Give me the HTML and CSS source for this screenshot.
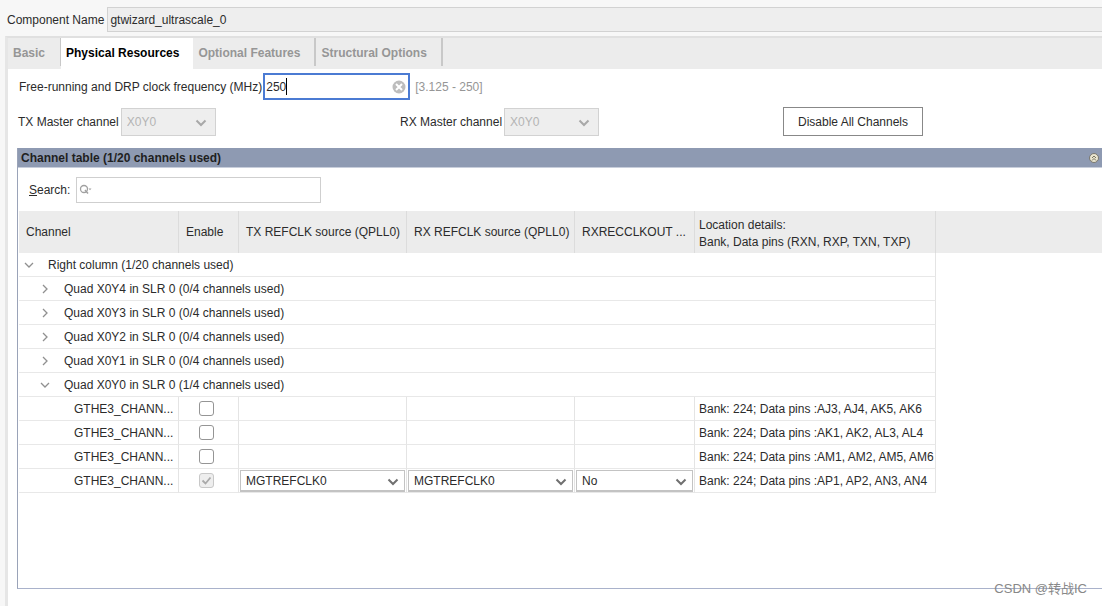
FILE: index.html
```
<!DOCTYPE html>
<html lang="en">
<head>
<meta charset="utf-8">
<title>Component configuration</title>
<link rel="stylesheet" href="styles.css">
</head>
<body>
<svg class="defs" aria-hidden="true">
  <symbol id="down" viewBox="0 0 12 8"><path d="M1.5 1.5 6 6l4.500-4.500" fill="none" stroke="currentColor" stroke-width="2"/></symbol>
  <symbol id="open" viewBox="0 0 12 12"><path d="M2 4l4 4 4-4" fill="none" stroke="currentColor" stroke-width="1.300"/></symbol>
  <symbol id="closed" viewBox="0 0 12 12"><path d="M4 2l4 4-4 4" fill="none" stroke="currentColor" stroke-width="1.300"/></symbol>
</svg>
<div class="name-row">
  <label for="component">Component Name</label>
  <input id="component" class="component" value="gtwizard_ultrascale_0">
</div>
<main class="panel">
  <div class="tabs" role="tablist">
    <button class="tab" role="tab">Basic</button>
    <button class="tab selected" role="tab" aria-selected="true">Physical Resources</button>
    <button class="tab divided" role="tab">Optional Features</button>
    <button class="tab divided" role="tab">Structural Options</button>
  </div>
  <div class="content">
    <div class="frequency">
      <label for="freq">Free-running and DRP clock frequency (MHz)</label>
      <div class="freq-box">
        <input id="freq" value="250">
        <span class="caret"></span>
        <button class="clear" aria-label="Clear"><svg viewBox="0 0 14 14"><circle cx="7" cy="7" r="6.500" fill="#bdbdbd"/><path d="M4 4l6 6M10 4l-6 6" stroke="#fff" stroke-width="2"/></svg></button>
      </div>
      <span class="hint">[3.125 - 250]</span>
    </div>
    <div class="masters">
      <div class="master">
        <label for="tx">TX Master channel</label>
        <div class="picker muted"><select id="tx" disabled><option>X0Y0</option></select><svg><use href="#down"/></svg></div>
      </div>
      <div class="master">
        <label for="rx">RX Master channel</label>
        <div class="picker muted"><select id="rx" disabled><option>X0Y0</option></select><svg><use href="#down"/></svg></div>
      </div>
      <button class="disable">Disable All Channels</button>
    </div>
    <section class="channels">
      <div class="bar">
        <h2>Channel table (1/20 channels used)</h2>
        <button class="collapse" aria-label="Collapse"><svg viewBox="0 0 10 10"><circle cx="5" cy="5" r="4.500" fill="#e8e4cf" stroke="#69665a" stroke-width=".8"/><path d="M3 5l2-2 2 2M3 7.500l2-2 2 2" fill="none" stroke="#77735f" stroke-width="1"/></svg></button>
      </div>
      <div class="search">
        <label for="search"><u>S</u>earch:</label>
        <div class="search-box">
          <svg viewBox="0 0 14 12"><circle cx="5" cy="5" r="3.500" fill="none" stroke="#a0a0a0" stroke-width="1.300"/><path d="M6 6l3 3.500" stroke="#a0a0a0" stroke-width="1.500"/><path d="M9.500 4.500h3L11 6.200z" fill="#a0a0a0"/></svg>
          <input id="search" type="text">
        </div>
      </div>
      <table>
        <colgroup><col class="c-channel"><col class="c-enable"><col class="c-clock"><col class="c-clock"><col class="c-out"><col class="c-location"><col></colgroup>
        <thead>
          <tr><th>Channel</th><th>Enable</th><th>TX REFCLK source (QPLL0)</th><th>RX REFCLK source (QPLL0)</th><th>RXRECCLKOUT ...</th><th class="location two-line">Location details:<br>Bank, Data pins (RXN, RXP, TXN, TXP)</th><th></th></tr>
        </thead>
        <tbody>
          <tr><td colspan="6" class="group root"><div><svg><use href="#open"/></svg><span>Right column (1/20 channels used)</span></div></td></tr>
          <tr><td colspan="6" class="group"><div><svg><use href="#closed"/></svg><span>Quad X0Y4 in SLR 0 (0/4 channels used)</span></div></td></tr>
          <tr><td colspan="6" class="group"><div><svg><use href="#closed"/></svg><span>Quad X0Y3 in SLR 0 (0/4 channels used)</span></div></td></tr>
          <tr><td colspan="6" class="group"><div><svg><use href="#closed"/></svg><span>Quad X0Y2 in SLR 0 (0/4 channels used)</span></div></td></tr>
          <tr><td colspan="6" class="group"><div><svg><use href="#closed"/></svg><span>Quad X0Y1 in SLR 0 (0/4 channels used)</span></div></td></tr>
          <tr><td colspan="6" class="group"><div><svg><use href="#open"/></svg><span>Quad X0Y0 in SLR 0 (1/4 channels used)</span></div></td></tr>
          <tr><td class="leaf">GTHE3_CHANN...</td><td class="tick"><input type="checkbox" aria-label="Enable channel 3"></td><td></td><td></td><td></td><td class="location">Bank: 224; Data pins :AJ3, AJ4, AK5, AK6</td></tr>
          <tr><td class="leaf">GTHE3_CHANN...</td><td class="tick"><input type="checkbox" aria-label="Enable channel 2"></td><td></td><td></td><td></td><td class="location">Bank: 224; Data pins :AK1, AK2, AL3, AL4</td></tr>
          <tr><td class="leaf">GTHE3_CHANN...</td><td class="tick"><input type="checkbox" aria-label="Enable channel 1"></td><td></td><td></td><td></td><td class="location">Bank: 224; Data pins :AM1, AM2, AM5, AM6</td></tr>
          <tr><td class="leaf">GTHE3_CHANN...</td><td class="tick"><input type="checkbox" aria-label="Enable channel 0" checked disabled></td>
            <td class="cell"><div class="picker"><select aria-label="TX REFCLK source"><option>MGTREFCLK0</option></select><svg><use href="#down"/></svg></div></td>
            <td class="cell"><div class="picker"><select aria-label="RX REFCLK source"><option>MGTREFCLK0</option></select><svg><use href="#down"/></svg></div></td>
            <td class="cell"><div class="picker"><select aria-label="RXRECCLKOUT"><option>No</option></select><svg><use href="#down"/></svg></div></td>
            <td class="location">Bank: 224; Data pins :AP1, AP2, AN3, AN4</td></tr>
        </tbody>
      </table>
    </section>
  </div>
</main>
<div class="watermark">CSDN @转战IC</div>
</body>
</html>
```
FILE: styles.css
```
* { box-sizing: border-box; }
body {
  margin: 0;
  min-height: 100vh;
  display: flex;
  flex-direction: column;
  gap: 4px;
  padding: 7px 0 0 5px;
  background: #f7f7f7;
  color: #2b2b2b;
  font: 12px/18px "Liberation Sans", Arial, "Noto Sans CJK SC", sans-serif;
  overflow: hidden;
}
button, input, select { font: inherit; color: inherit; margin: 0; border-radius: 0; }
button { padding: 0; border: 0; background: none; }
label { white-space: nowrap; }
.defs { position: absolute; width: 0; height: 0; }

.name-row { display: flex; align-items: center; gap: 3px; padding-left: 2px; }
.component {
  flex: 1;
  height: 25px;
  padding: 0 2px;
  border: 1px solid #d2d2d2;
  border-right: 0;
  background: #eee;
}

.panel {
  flex: 1;
  display: flex;
  flex-direction: column;
  border-left: 3px solid #e6e6e6;
  border-top: 2px solid #e0e0e0;
  background: #fff;
}
.tabs { display: flex; align-items: flex-start; height: 31px; background: #ececec; }
.tab {
  height: 28px;
  padding: 2px 5px 0;
  color: #969696;
  font-weight: bold;
}
.tab:first-child { padding-right: 15px; border-right: 1px solid #c8c8c8; }
.tab.selected { height: 31px; padding: 0 14px 1px 5px; background: #fff; color: #000; }
.tab.divided { padding-right: 14px; border-right: 2px solid #c8c8c8; }

.content {
  flex: 1;
  display: flex;
  flex-direction: column;
  padding: 4px 0 17px 9px;
}
.frequency { display: flex; align-items: center; gap: 1px; padding-left: 2px; }
.freq-box {
  position: relative;
  display: flex;
  align-items: center;
  width: 147px;
  height: 27px;
  padding: 0 2px 0 1px;
  border: 2px solid #4b7bd3;
}
.freq-box input { flex: 1; min-width: 0; border: 0; padding: 0; outline: 0; background: none; }
.caret { position: absolute; left: 21px; top: 3px; width: 1px; height: 17px; background: #000; }
.clear { width: 14px; height: 14px; }
.clear svg, .collapse svg { display: block; width: 100%; height: 100%; }
.hint { margin-left: 4px; color: #969696; }

.masters { display: flex; align-items: center; padding: 7px 0 12px 1px; }
.master { display: flex; align-items: center; gap: 2px; width: 382px; }
.picker { position: relative; height: 22px; color: #2b2b2b; }
.picker select {
  display: block;
  width: 100%;
  height: 100%;
  padding: 0 24px 0 5px;
  border: 1px solid #c3c3c3;
  border-bottom-width: 2px;
  background: #fff;
  appearance: none;
  opacity: 1;
}
.picker svg { position: absolute; right: 6px; top: 8px; width: 12px; height: 8px; color: #707070; pointer-events: none; }
.picker.muted { width: 95px; height: 28px; }
.picker.muted select { border: 1px solid #d2d2d2; background: #eee; color: #b4b4b4; }
.picker.muted svg { right: 9px; top: 11px; color: #a8a8a8; }
.disable { width: 140px; height: 29px; margin-left: 1px; border: 1px solid #888; background: #fff; }

.channels {
  flex: 1;
  border-left: 1px solid #9aa3b8;
  border-bottom: 1px solid #a9b2cb;
}
.bar {
  display: flex;
  align-items: center;
  justify-content: space-between;
  height: 20px;
  padding: 0 3px;
  border-bottom: 1px solid #c8cedb;
  background: #8e9ab2;
}
.bar h2 { margin: 0; font-size: 12px; color: #1f1f1f; }
.collapse { width: 10px; height: 10px; }
.search { display: flex; align-items: center; gap: 6px; padding: 9px 0 8px 11px; }
.search-box { display: flex; align-items: center; width: 245px; height: 26px; padding: 0 2px; border: 1px solid #cfcfcf; }
.search-box svg { width: 14px; height: 12px; }
.search-box input { flex: 1; min-width: 0; border: 0; outline: 0; background: none; }

table { width: 100%; padding-left: 1px; table-layout: fixed; border-collapse: separate; border-spacing: 0; }
.c-channel { width: 160px; }
.c-enable { width: 60px; }
.c-clock { width: 168px; }
.c-out { width: 120px; }
.c-location { width: 241px; }
th, td { padding: 0 0 0 7px; text-align: left; font-weight: normal; white-space: nowrap; }
th { height: 42px; border-right: 1px solid #dcdcdc; background: #ececec; }
th:last-child { border-right: 0; }
td { height: 24px; line-height: 20px; border-right: 1px solid #e4e4e4; border-bottom: 1px solid #e8e8e8; }
.location { padding-left: 4px; }
.two-line { padding-top: 4px; line-height: 17px; }
.group { padding-left: 20px; }
.group.root { padding-left: 4px; }
.group div { display: flex; align-items: center; gap: 13px; }
.group svg { width: 12px; height: 12px; color: #909090; }
.leaf { padding-left: 55px; }
.tick { padding: 0 4px 0 0; text-align: center; }
.tick input {
  display: block;
  width: 15px;
  height: 15px;
  margin: 0 auto;
  appearance: none;
  border: 1px solid #959595;
  border-radius: 3px;
  background: #fff;
}
.tick input:checked {
  border-color: #c8c8c8;
  background: #eee url("data:image/svg+xml,%3Csvg xmlns='http://www.w3.org/2000/svg' viewBox='0 0 13 13'%3E%3Cpath d='M2.500 6.500l3 3 5-6' fill='none' stroke='%23aaa' stroke-width='1.800'/%3E%3C/svg%3E");
}
.cell { padding: 0 1px; }

.watermark { position: absolute; right: 15px; bottom: 8px; color: #888; font-size: 13px; }
```
